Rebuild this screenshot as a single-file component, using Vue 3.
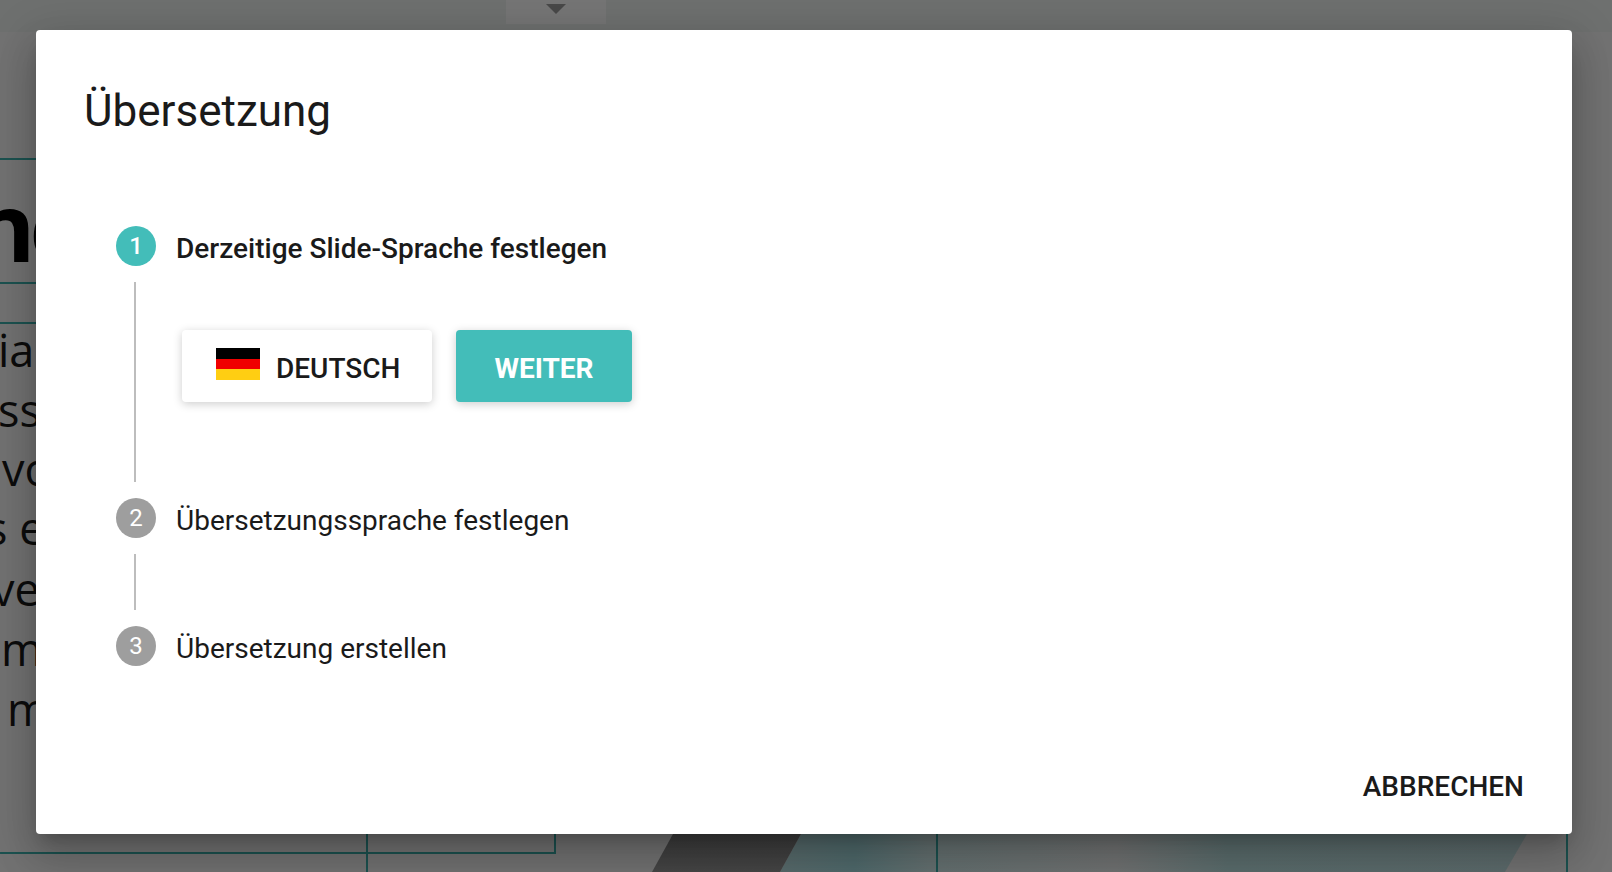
<script setup>
const fragments = [
  { text: 'ia', left: -2, top: 320 },
  { text: 'ss', left: -2, top: 380 },
  { text: 'vo', left: 2, top: 439 },
  { text: 's e', left: -14, top: 498 },
  { text: 've', left: -8, top: 559 },
  { text: 'm', left: 1, top: 619 },
  { text: 'm', left: 7, top: 679 },
]
const steps = [
  { n: 2, label: 'Übersetzungssprache festlegen' },
  { n: 3, label: 'Übersetzung erstellen' },
]
</script>

<template>
  <div class="page">
    <div class="deck">
      <div class="topbar">
        <div class="tab"><span class="caret"></span></div>
      </div>
      <span class="rule rule-a"></span>
      <span class="rule rule-b"></span>
      <span class="rule rule-c"></span>
      <span class="headline">ne</span>
      <span
        v-for="f in fragments"
        :key="f.top"
        class="frag"
        :style="{ left: f.left + 'px', top: f.top + 'px' }"
      >{{ f.text }}</span>
      <svg class="art" width="1612" height="872" viewBox="0 0 1612 872">
        <defs>
          <linearGradient id="dark" x1="0" y1="0" x2="0" y2="1">
            <stop offset="0" stop-color="#3c3c3c" />
            <stop offset="1" stop-color="#464646" />
          </linearGradient>
          <linearGradient id="teal" x1="0" y1="0" x2="1" y2="0">
            <stop offset="0" stop-color="#586a6b" />
            <stop offset="0.1" stop-color="#4f696b" />
            <stop offset="0.2" stop-color="#647070" />
            <stop offset="0.45" stop-color="#707272" />
            <stop offset="0.6" stop-color="#5a6c6c" />
            <stop offset="1" stop-color="#5c6a6b" />
          </linearGradient>
        </defs>
        <polygon points="801,834 1527,834 1505,872 780,872" fill="url(#teal)" />
        <polygon points="673,834 801,834 780,872 652,872" fill="url(#dark)" />
        <path d="M0 853H555V820" fill="none" stroke="#1c5250" stroke-width="2" />
        <path d="M367 820V872M937 820V872M1567 820V872" fill="none" stroke="#1c5250" stroke-width="2" />
      </svg>
    </div>

    <div class="overlay">
      <section class="dialog">
        <h1 class="title">Übersetzung</h1>

        <div class="stepper">
          <div class="step-head">
            <span class="dot dot-active">1</span>
            <span class="label label-active">Derzeitige Slide-Sprache festlegen</span>
          </div>
          <div class="step-body">
            <div class="actions">
              <button class="btn btn-lang" type="button">
                <svg class="flag" width="44" height="32" viewBox="0 0 44 32">
                  <rect width="44" height="11" fill="#000" />
                  <rect y="11" width="44" height="10" fill="#f00000" />
                  <rect y="21" width="44" height="11" fill="#ffce12" />
                </svg>
                <span class="btn-text">DEUTSCH</span>
              </button>
              <button class="btn btn-next" type="button"><span class="btn-text">WEITER</span></button>
            </div>
          </div>
          <template v-for="(s, i) in steps" :key="s.n">
            <div class="step-head">
              <span class="dot">{{ s.n }}</span>
              <span class="label">{{ s.label }}</span>
            </div>
            <div v-if="i === 0" class="step-body step-empty"></div>
          </template>
        </div>

        <footer class="foot">
          <button class="cancel" type="button">ABBRECHEN</button>
        </footer>
      </section>
    </div>
  </div>
</template>

<style>
html, body { margin: 0; background: #717171; }
</style>

<style scoped>
.page {
  position: relative;
  width: 1612px;
  height: 872px;
  overflow: hidden;
  background: #727272;
  font-family: Roboto, "Liberation Sans", sans-serif;
}
.deck { position: absolute; inset: 0; }
.topbar {
  position: absolute;
  top: 0;
  left: 0;
  right: 0;
  height: 32px;
  background: #6e706f;
}
.tab {
  position: absolute;
  left: 506px;
  top: 0;
  width: 100px;
  height: 24px;
  background: #757575;
}
.caret {
  position: absolute;
  left: 40px;
  top: 4px;
  border-left: 10px solid transparent;
  border-right: 10px solid transparent;
  border-top: 10px solid #484848;
}
.rule { position: absolute; left: 0; width: 60px; height: 2px; background: #1c5250; }
.rule-a { top: 158px; }
.rule-b { top: 282px; }
.rule-c { top: 322px; }
.headline {
  position: absolute;
  left: -27px;
  top: 160px;
  font: 700 95px/130px "Open Sans", sans-serif;
  letter-spacing: -6px;
  color: #000;
}
.frag {
  position: absolute;
  font: 400 45px/60px "Open Sans", sans-serif;
  color: #0c0c0c;
}
.art { position: absolute; left: 0; top: 0; }

.overlay {
  position: absolute;
  inset: 0;
  display: flex;
  padding: 30px 40px 38px 36px;
  box-sizing: border-box;
}
.dialog {
  flex: 1;
  display: flex;
  flex-direction: column;
  background: #fff;
  border-radius: 4px;
  padding: 0 48px;
  box-shadow:
    0 11px 15px -7px rgba(0, 0, 0, .2),
    0 24px 38px 3px rgba(0, 0, 0, .14),
    0 9px 46px 8px rgba(0, 0, 0, .12);
  color: #1a1a1a;
}
.title {
  margin: 51px 0 0;
  font-size: 44px;
  line-height: 60px;
  font-weight: 400;
}
.stepper {
  display: flex;
  flex-direction: column;
  margin: 85px 0 0 32px;
}
.step-head {
  display: flex;
  align-items: center;
  gap: 20px;
  height: 40px;
}
.dot {
  flex: none;
  width: 40px;
  height: 40px;
  border-radius: 50%;
  background: #9e9e9e;
  color: #fff;
  font-size: 24px;
  line-height: 40px;
  text-align: center;
}
.dot-active { background: #43bdb9; font-weight: 500; }
.label {
  font-size: 28px;
  line-height: 40px;
  position: relative;
  top: 3px;
}
.label-active { font-weight: 500; }
.step-body {
  height: 200px;
  margin: 16px 0 16px 18px;
  border-left: 2px solid #bdbdbd;
  padding: 48px 0 0 46px;
  box-sizing: border-box;
}
.step-empty { height: 56px; padding: 0; }
.actions { display: flex; gap: 24px; }
.btn {
  height: 72px;
  border: 0;
  border-radius: 4px;
  font-family: inherit;
  font-size: 28px;
  font-weight: 500;
  display: flex;
  align-items: center;
  box-shadow: 0 2px 10px rgba(0, 0, 0, .2);
}
.btn-text { position: relative; top: 2px; }
.btn-lang {
  width: 250px;
  background: #fff;
  color: #1a1a1a;
  padding: 0 0 0 34px;
  gap: 16px;
}
.flag { flex: none; position: relative; top: -2px; }
.btn-next {
  width: 176px;
  background: #43bdb9;
  color: #fff;
  justify-content: center;
  font-weight: 700;
}
.foot {
  margin-top: auto;
  display: flex;
  justify-content: flex-end;
  padding-bottom: 27px;
}
.cancel {
  border: 0;
  background: none;
  padding: 0;
  font-family: inherit;
  font-size: 28px;
  font-weight: 500;
  line-height: 40px;
  color: #1a1a1a;
}
</style>
